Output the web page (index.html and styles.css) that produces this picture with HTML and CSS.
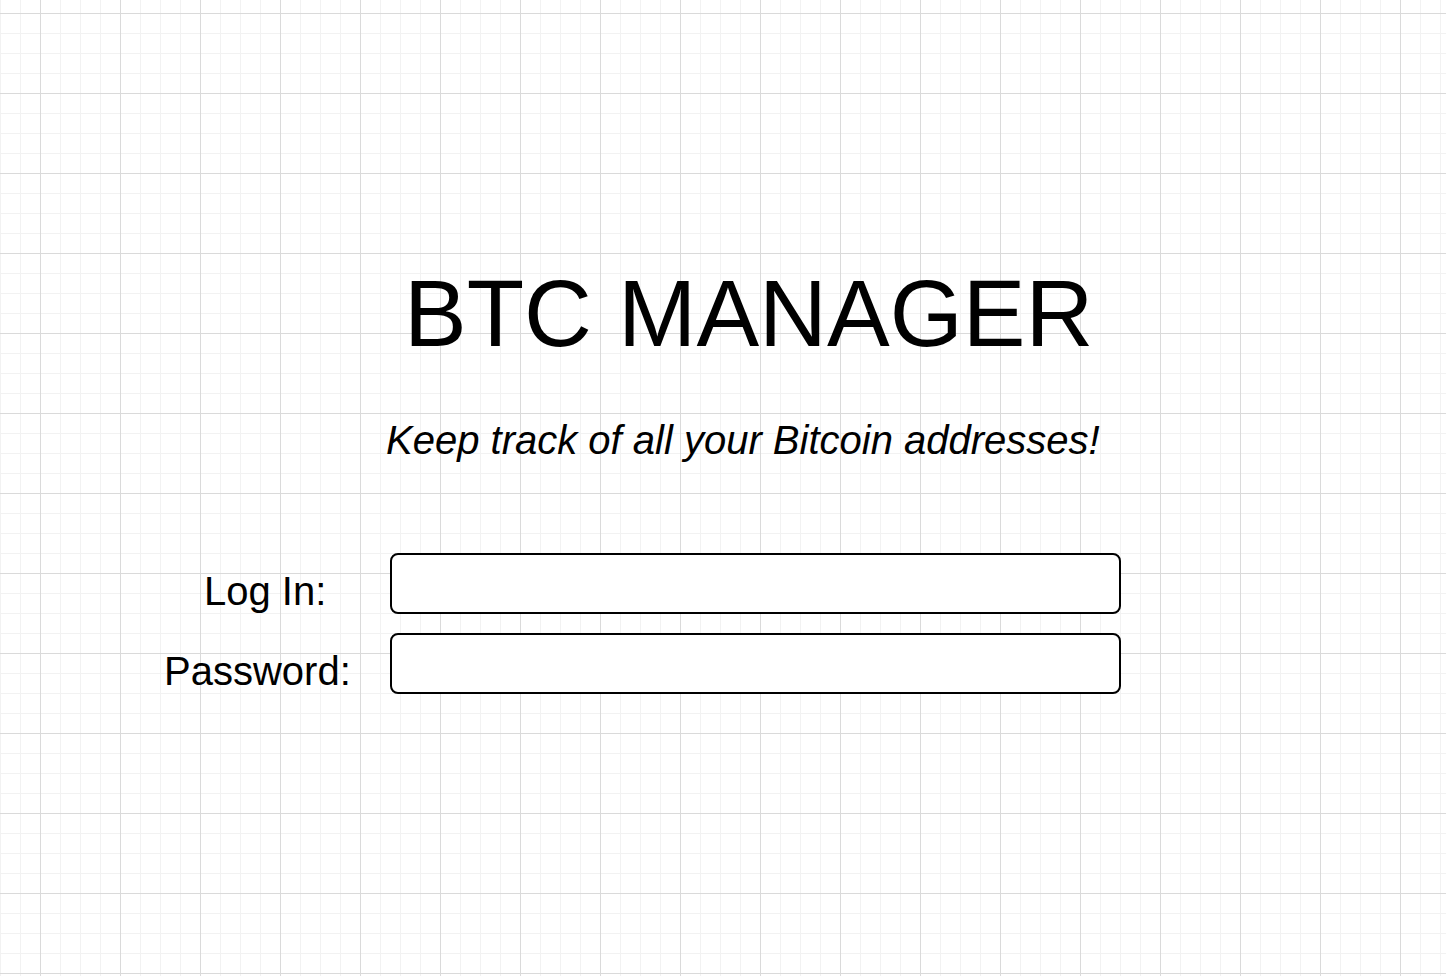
FILE: index.html
```html
<!DOCTYPE html>
<html lang="en">
<head>
<meta charset="utf-8">
<title>BTC Manager</title>
<link rel="stylesheet" href="styles.css">
</head>
<body>
<main class="page">
  <h1 class="title">BTC MANAGER</h1>
  <p class="subtitle">Keep track of all your Bitcoin addresses!</p>
  <form class="form">
    <div class="row">
      <label class="label label-login" for="login">Log In:</label>
      <input class="field" id="login" type="text">
    </div>
    <div class="row">
      <label class="label label-password" for="password">Password:</label>
      <input class="field" id="password" type="password">
    </div>
  </form>
</main>
</body>
</html>
```

FILE: styles.css
```css
html, body {
  margin: 0;
  padding: 0;
}

body {
  width: 1446px;
  height: 976px;
  overflow: hidden;
  font-family: "Liberation Sans", Arial, Helvetica, sans-serif;
  color: #000;
  background-color: #fff;
  background-image:
    linear-gradient(to right, #dadada 1px, transparent 1px),
    linear-gradient(to bottom, #dadada 1px, transparent 1px),
    linear-gradient(to right, #f2f2f2 1px, transparent 1px),
    linear-gradient(to bottom, #f2f2f2 1px, transparent 1px);
  background-size: 80px 80px, 80px 80px, 20px 20px, 20px 20px;
  background-position: 40px 0, 0 13px, 0 0, 0 13px;
}

.page {
  padding-top: 266px;
  display: flex;
  flex-direction: column;
}

.title {
  margin: 0 0 0 404px;
  font-size: 94px;
  line-height: 95px;
  font-weight: normal;
  white-space: nowrap;
}

.subtitle {
  margin: 59px 0 0 386px;
  font-size: 40px;
  line-height: 40px;
  font-style: italic;
  white-space: nowrap;
}

.form {
  margin-top: 93px;
  display: flex;
  flex-direction: column;
  gap: 19px;
}

.row {
  display: grid;
  grid-template-columns: 390px 731px;
  align-items: start;
  height: 61px;
}

.label {
  padding-top: 18px;
  font-size: 40px;
  line-height: 40px;
  white-space: nowrap;
}

.label-login {
  padding-left: 204px;
}

.label-password {
  padding-left: 164px;
}

.field {
  box-sizing: border-box;
  width: 731px;
  height: 61px;
  margin: 0;
  border: 2px solid #000;
  border-radius: 8px;
  background: #fff;
  outline: none;
}
```
